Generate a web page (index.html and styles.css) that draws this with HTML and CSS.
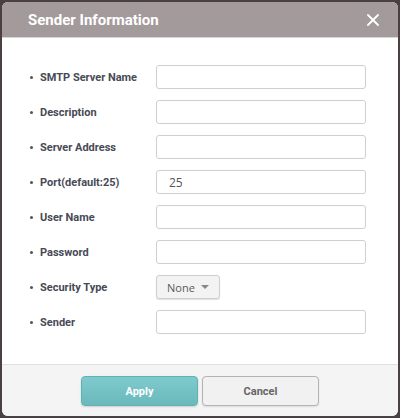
FILE: index.html
```html
<!DOCTYPE html>
<html>
<head>
<meta charset="utf-8">
<link rel="stylesheet" href="styles.css">
</head>
<body>
<div class="dialog">
  <div class="header">
    <span class="title">Sender Information</span>
    <svg class="close" width="12" height="12" viewBox="0 0 12 12"><path d="M1 1L11 11M11 1L1 11" stroke="#fff" stroke-width="1.8" stroke-linecap="round"/></svg>
  </div>
  <div class="body">
    <div class="row"><span class="label">SMTP Server Name</span><input class="field" type="text"></div>
    <div class="row"><span class="label">Description</span><input class="field" type="text"></div>
    <div class="row"><span class="label">Server Address</span><input class="field" type="text"></div>
    <div class="row"><span class="label">Port(default:25)</span><input class="field" type="text" value="25"></div>
    <div class="row"><span class="label">User Name</span><input class="field" type="text"></div>
    <div class="row"><span class="label">Password</span><input class="field" type="password"></div>
    <div class="row"><span class="label">Security Type</span><div class="select">None <span class="caret"></span></div></div>
    <div class="row"><span class="label">Sender</span><input class="field" type="text"></div>
  </div>
  <div class="footer">
    <button class="btn apply">Apply</button>
    <button class="btn cancel">Cancel</button>
  </div>
</div>
</body>
</html>
```

FILE: styles.css
```css
html, body {
  margin: 0;
  padding: 0;
  background: #4a4042;
  width: 400px;
  height: 418px;
  overflow: hidden;
}
.dialog {
  margin: 2px;
  width: 396px;
  height: 414px;
  border-radius: 6px;
  overflow: hidden;
  background: #fff;
  display: flex;
  flex-direction: column;
  font-family: Roboto, "Liberation Sans", sans-serif;
}
.header {
  height: 35px;
  background: #a39a9c;
  border-bottom: 1px solid #d9d6d7;
  display: flex;
  align-items: center;
  justify-content: space-between;
  padding: 0 19px 0 26px;
}
.title {
  color: #fff;
  font-weight: bold;
  font-size: 15px;
}
.close {
  display: block;
}
.body {
  flex: 1;
  padding: 27px 0 0 0;
  display: flex;
  flex-direction: column;
  gap: 11px;
}
.row {
  display: flex;
  align-items: center;
  height: 24px;
}
.label {
  width: 117px;
  padding-left: 28px;
  font-size: 11px;
  font-weight: bold;
  color: #474a55;
  display: flex;
  align-items: center;
}
.label::before {
  content: "";
  width: 3px;
  height: 3px;
  background: #555;
  border-radius: 50%;
  margin-right: 7px;
}
.field {
  box-sizing: border-box;
  width: 210px;
  height: 24px;
  margin: 0 0 0 9px;
  border: 1.5px solid #cfcfcf;
  border-radius: 3px;
  padding: 0 0 0 12px;
  font-family: "Open Sans", "Liberation Sans", sans-serif;
  font-size: 12px;
  color: #555;
  outline: none;
}
.select {
  box-sizing: border-box;
  margin-left: 9px;
  width: 64px;
  height: 24px;
  border: 1px solid #cfcfcf;
  border-radius: 3px;
  background: #f3f3f3;
  box-shadow: 0 1px 1px rgba(0,0,0,0.12);
  display: flex;
  align-items: center;
  justify-content: center;
  gap: 6px;
  font-family: "Open Sans", "Liberation Sans", sans-serif;
  font-size: 11px;
  color: #5a5a5a;
}
.caret {
  width: 0;
  height: 0;
  border-left: 4px solid transparent;
  border-right: 4px solid transparent;
  border-top: 4px solid #888;
}
.footer {
  height: 52px;
  background: #f4f4f4;
  border-top: 1px solid #e0e0e0;
  display: flex;
  justify-content: center;
  align-items: flex-start;
  padding-top: 11px;
  box-sizing: border-box;
  gap: 4px;
}
.btn {
  box-sizing: border-box;
  width: 117px;
  height: 30px;
  border-radius: 4px;
  font-family: Roboto, "Liberation Sans", sans-serif;
  font-weight: bold;
  font-size: 11px;
  cursor: pointer;
}
.apply {
  background: linear-gradient(#7fcacd, #6ab9bc);
  border: 1px solid #5db2b4;
  color: #fff;
  box-shadow: 0 1px 2px rgba(0,0,0,0.15);
}
.cancel {
  background: #f1f1f1;
  border: 1.5px solid #b3b3b3;
  color: #666;
  box-shadow: 0 1px 2px rgba(0,0,0,0.1);
}
```
